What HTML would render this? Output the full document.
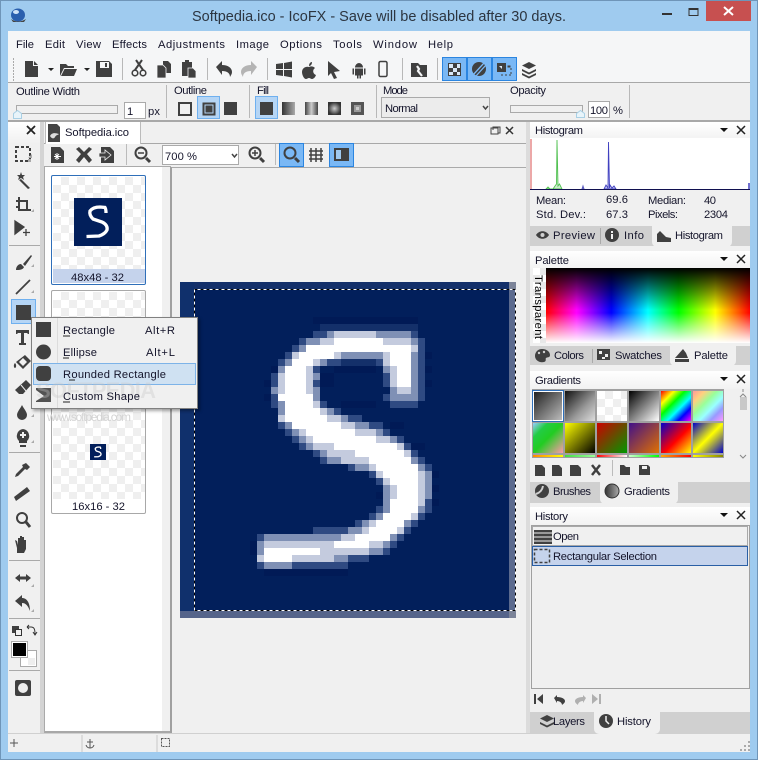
<!DOCTYPE html>
<html><head><meta charset="utf-8"><title>IcoFX</title>
<style>
html,body{margin:0;padding:0;width:758px;height:760px;overflow:hidden;background:#9fcbef}
div{position:absolute;box-sizing:border-box}
svg{position:absolute;left:0;top:0}
text{font:11.2px "Liberation Sans",sans-serif;fill:#14142a;white-space:pre}
.g{background:#f0f0f0}
.ck{background:repeating-conic-gradient(#efefef 0 25%,#fff 0 50%) 0 0/16px 16px}
.cell{width:30px;height:30px}
</style></head><body>
<div style="left:0;top:0;width:758px;height:760px;border:1px solid #6f95b8;background:#9fcbef"></div>
<div style="left:8px;top:31px;width:742px;height:721px;background:#f0f0f0"></div>
<div style="left:8px;top:31px;width:742px;height:52px;background:#f5f6f7"></div>
<div style="left:8px;top:82px;width:742px;height:1px;background:#a8a8a8"></div>
<div style="left:8px;top:120px;width:742px;height:2px;background:#a8a8a8"></div>
<div style="left:8px;top:122px;width:32px;height:611px;background:linear-gradient(#fff 0,#f0f0f0 22px)"></div>
<div style="left:40px;top:122px;width:4px;height:611px;background:#d4d4d4"></div>
<div style="left:44px;top:122px;width:483px;height:22px;background:#f0f0f0;border-bottom:1px solid #a8a8a8"></div>
<div style="left:45px;top:122px;width:96px;height:22px;background:#fff;border-right:1px solid #bbb;border-left:1px solid #bbb"></div>
<div style="left:44px;top:166px;width:1px;height:567px;background:#aaa"></div>
<div style="left:45px;top:166px;width:117px;height:566px;background:#fff"></div>
<div style="left:45px;top:166px;width:126px;height:1px;background:#aaa"></div>
<div style="left:45px;top:731px;width:126px;height:2px;background:#a8a8a8"></div>
<div style="left:162px;top:167px;width:8px;height:564px;background:#f0f0f0"></div>
<div style="left:170px;top:167px;width:2px;height:566px;background:#a0a0a0"></div>
<div style="left:172px;top:167px;width:354px;height:566px;background:#f0f0f0"></div>
<div style="left:172px;top:167px;width:354px;height:1px;background:#aaa"></div>
<div style="left:526px;top:122px;width:4px;height:611px;background:#dcdcdc"></div>
<div style="left:8px;top:733px;width:742px;height:1px;background:#d0d0d0"></div>
<!-- thumbnails -->
<div style="left:51px;top:175px;width:95px;height:110px;border:1px solid #2f6fb9;border-radius:2px;background:#fff"></div>
<div class="ck" style="left:53px;top:177px;width:92px;height:92px"></div>
<div style="left:53px;top:269px;width:92px;height:14px;background:#c5d3ec"></div>
<div style="left:74px;top:198px;width:48px;height:48px;background:#021f5b"></div>
<div style="left:51px;top:290px;width:95px;height:224px;border:1px solid #a8a8a8;border-radius:2px;background:#fff"></div>
<div class="ck" style="left:53px;top:292px;width:92px;height:207px"></div>
<div style="left:90px;top:444px;width:16px;height:16px;background:#021f5b"></div>
<!-- canvas -->
<div style="left:180px;top:282px;width:336px;height:336px;background:#021f5b"></div>
<!-- right panels -->
<div style="left:530px;top:122px;width:220px;height:18px;background:linear-gradient(#fff,#f2f2f2)"></div>
<div style="left:530px;top:138px;width:220px;height:52px;background:#fff"></div>
<div style="left:530px;top:226px;width:220px;height:20px;background:#d0d0d0"></div>
<div style="left:652px;top:226px;width:80px;height:21px;background:#f0f0f0;border-radius:0 0 5px 5px"></div>
<div style="left:530px;top:251px;width:220px;height:18px;background:linear-gradient(#fff,#f2f2f2)"></div>
<div style="left:533px;top:268px;width:13px;height:75px;background:repeating-conic-gradient(#e8e8e8 0 25%,#fff 0 50%) 0 0/14px 14px"></div>
<div style="left:546px;top:268px;width:204px;height:75px;background:linear-gradient(#000 0,rgba(0,0,0,0) 56%,rgba(255,255,255,0) 60%,#fff 100%),linear-gradient(90deg,#f00 0,#f0f 15%,#00f 32%,#0ff 50%,#0f0 65%,#ff0 83%,#f00 100%)"></div>
<div style="left:530px;top:346px;width:220px;height:19px;background:#d0d0d0"></div>
<div style="left:670px;top:346px;width:66px;height:20px;background:#f0f0f0;border-radius:0 0 5px 5px"></div>
<div style="left:530px;top:371px;width:220px;height:18px;background:linear-gradient(#fff,#f2f2f2)"></div>
<div style="left:532px;top:389px;width:192px;height:69px;background:#a0a0a0"></div>
<div class="cell" style="left:533px;top:391px;background:linear-gradient(135deg,#222,#bbb);outline:1px solid #2f6fb9;border:1px solid #fff"></div>
<div class="cell" style="left:565px;top:391px;background:linear-gradient(135deg,#111,#999 60%,#ddd)"></div>
<div class="cell ck" style="left:597px;top:391px"></div>
<div class="cell" style="left:629px;top:391px;background:linear-gradient(135deg,#000,#fff)"></div>
<div class="cell" style="left:661px;top:391px;background:linear-gradient(135deg,#f00,#ff0 22%,#0f0 40%,#0ff 60%,#00f 78%,#f0f)"></div>
<div class="cell" style="left:693px;top:391px;background:linear-gradient(135deg,#f99,#ffd080 20%,#9f9 40%,#9ff 60%,#99f 78%,#f9f)"></div>
<div class="cell" style="left:533px;top:423px;background:linear-gradient(135deg,#9cf,#2c4,#2c2 50%,#f9a)"></div>
<div class="cell" style="left:565px;top:423px;background:linear-gradient(135deg,#ff0,#000)"></div>
<div class="cell" style="left:597px;top:423px;background:linear-gradient(135deg,#c00,#090)"></div>
<div class="cell" style="left:629px;top:423px;background:linear-gradient(135deg,#40108a,#e07000)"></div>
<div class="cell" style="left:661px;top:423px;background:linear-gradient(135deg,#00c,#f00 55%,#ff0)"></div>
<div class="cell" style="left:693px;top:423px;background:linear-gradient(135deg,#00c,#ff0 50%,#00c)"></div>
<div style="left:533px;top:455px;width:30px;height:2px;background:linear-gradient(90deg,#f80,#ff0)"></div>
<div style="left:565px;top:455px;width:30px;height:2px;background:linear-gradient(90deg,#4d4,#9f9)"></div>
<div style="left:597px;top:455px;width:30px;height:2px;background:linear-gradient(90deg,#f00,#fff)"></div>
<div style="left:629px;top:455px;width:30px;height:2px;background:linear-gradient(90deg,#cfc,#0f0)"></div>
<div style="left:661px;top:455px;width:30px;height:2px;background:linear-gradient(90deg,#fa0,#f00)"></div>
<div style="left:693px;top:455px;width:30px;height:2px;background:linear-gradient(90deg,#ff0,#880)"></div>
<div style="left:740px;top:397px;width:7px;height:13px;background:#c8c8c8"></div>
<div style="left:530px;top:482px;width:220px;height:21px;background:#d0d0d0"></div>
<div style="left:600px;top:482px;width:78px;height:22px;background:#f0f0f0;border-radius:0 0 5px 5px"></div>
<div style="left:530px;top:507px;width:220px;height:18px;background:linear-gradient(#fff,#f2f2f2)"></div>
<div style="left:531px;top:525px;width:219px;height:164px;border:1px solid #a0a0a0;background:#f0f0f0"></div>
<div style="left:532px;top:526px;width:216px;height:20px;border:1px solid #a8a8a8"></div>
<div style="left:532px;top:546px;width:216px;height:20px;border:1px solid #2a5fa5;background:#c5d3ec"></div>
<div style="left:530px;top:712px;width:220px;height:21px;background:#d0d0d0"></div>
<div style="left:594px;top:712px;width:66px;height:22px;background:#f0f0f0;border-radius:0 0 5px 5px"></div>

<svg width="758" height="760" viewBox="0 0 758 760">
<!-- window chrome -->
<rect x="706" y="1" width="45" height="20" fill="#c75050"/>
<path d="M724 7l9 8M733 7l-9 8" stroke="#fff" stroke-width="2" fill="none"/>
<rect x="662" y="13" width="10" height="2" fill="#333"/>
<rect x="689" y="8.500" width="9" height="7" fill="none" stroke="#333"/><rect x="689" y="8" width="9" height="2" fill="#333"/>
<ellipse cx="18" cy="15" rx="7" ry="6.500" fill="#2a5fae"/><ellipse cx="16" cy="12" rx="3" ry="2" fill="#cfe2f7"/><path d="M11 19q7 5 15 0l-2 3H13z" fill="#444"/>
<text x="192" y="21" textLength="374" lengthAdjust="spacingAndGlyphs" style="font-size:15px;fill:#2c3540">Softpedia.ico - IcoFX - Save will be disabled after 30 days.</text>
<!-- menus -->
<text x="16" y="48" textLength="18">File</text><text x="45" y="48" textLength="20">Edit</text><text x="76" y="48" textLength="25">View</text><text x="112" y="48" textLength="35">Effects</text><text x="158" y="48" textLength="67">Adjustments</text><text x="236" y="48" textLength="33">Image</text><text x="280" y="48" textLength="42">Options</text><text x="333" y="48" textLength="29">Tools</text><text x="373" y="48" textLength="44">Window</text><text x="428" y="48" textLength="25">Help</text>
<!-- toolbar -->
<g fill="#404040">
<path d="M13 58h1v2h-1zM13 61h1v2h-1zM13 64h1v2h-1zM13 67h1v2h-1zM13 70h1v2h-1zM13 73h1v2h-1zM13 76h1v2h-1zM13 79h1v2h-1z" fill="#aaa"/>
<path d="M25 61h8v5h5v11H25zM34 61l4 4h-4z"/>
<path d="M48 68h6l-3 3zM84 68h6l-3 3z" fill="#222"/>
<path d="M60 64h6l2 2h6v2H64l-4 8zM64.500 69H77l-3 7H61z"/>
<path d="M96 61h13l3 3v13H96z"/><rect x="100" y="62" width="9" height="6" fill="#f5f6f7"/><rect x="105" y="63" width="2" height="4"/>
<path d="M135 70L142 60M143 70L136 60" stroke="#404040" stroke-width="2"/><circle cx="135" cy="73" r="2.800" fill="none" stroke="#404040" stroke-width="1.600"/><circle cx="143" cy="73" r="2.800" fill="none" stroke="#404040" stroke-width="1.600"/>
<path d="M163 61h5l3 3v9h-8z"/><path d="M157 65h6l3 3v10h-9z" stroke="#f5f6f7" stroke-width=".8"/>
<path d="M182 62h3v-2h4v2h3v14h-10z"/><path d="M188 68h5l3 3v7h-8z" stroke="#f5f6f7" stroke-width=".8"/>
<path d="M216 67l6-6v4c6 0 10 3 10 7 0 2-1 3-2 5 0-4-3-6-8-6v4z"/>
<path d="M257 67l-6-6v4c-6 0-10 3-10 7 0 2 1 3 2 5 0-4 3-6 8-6v4z" fill="#b4b4b4"/>
<path d="M276 64l7-1v6h-7zM284 63l8-1.500V69h-8zM276 70h7v6l-7-1zM284 70h8v7.500l-8-1.500z"/>
<path d="M309 67c2-1 4-1 6 1-3 2-2 6 1 7-1 3-3 4-4 4-1 0-2-1-3-1s-2 1-3 1c-2 0-4-4-4-7 0-4 4-6 7-5zM309 66c0-2 1-4 3-4 0 2-1 4-3 4z"/>
<path d="M328 61l12 10-6 1 3 6-3 1-3-6-3 3z"/>
<path d="M355 67.500a4 4.500 0 0 1 8 0zM355 68.500h8v7h-2v3h-1.500v-3h-1v3H357v-3h-2zM352.500 68.500h1.500v6h-1.500zM364 68.500h1.500v6H364z"/>
<rect x="379" y="61.500" width="8" height="15" rx="1.500" fill="none" stroke="#404040" stroke-width="1.500"/>
<path d="M411 63h7l2 2h7v12h-16z"/><path d="M417 66l2 3-1 2 4 5" stroke="#f5f6f7" stroke-width="2.200" fill="none"/>
<path d="M122 58h1v22h-1zM207 58h1v22h-1zM267 58h1v22h-1zM402 58h1v22h-1zM437 58h1v22h-1z" fill="#b8b8b8"/>
<g fill="#7ab8f5" stroke="#2b85e0"><rect x="442.500" y="57.500" width="24" height="23"/><rect x="467.500" y="57.500" width="24" height="23"/><rect x="492.500" y="57.500" width="24" height="23"/></g>
<rect x="448" y="63" width="13" height="13"/><path d="M449 64h4v4h-4zM453 68h4v4h-4zM457 72h3v3h-3zM457 64h3v4h-3zM449 72h4v3h-4z" fill="#dbe9f7"/>
<circle cx="479" cy="69" r="7"/><path d="M473 75l11-12M476 76l10-11" stroke="#7ab8f5" stroke-width="1.300"/>
<path d="M497 63h9v9h-9z"/><path d="M502 66h-3l3 3z" fill="#dbe9f7"/><path d="M508 66h2v1h-2zM511 68v2M511 72v2M501 75h2M505 75h2M509 75h2" stroke="#404040"/>
<path d="M529 62l7 3.500-7 3.500-7-3.500zM522 69l7 3.500 7-3.500v2l-7 3.500-7-3.500zM522 73l7 3.500 7-3.500v2l-7 3.500-7-3.500z"/>
</g>
<!-- options bar -->
<text x="16" y="95" textLength="64">Outline Width</text><text x="174" y="94" textLength="33">Outline</text><text x="257" y="94" textLength="12">Fill</text><text x="383" y="94" textLength="25">Mode</text><text x="510" y="94" textLength="36">Opacity</text>
<rect x="16.500" y="105.500" width="101" height="8" fill="#f0f0f0" stroke="#aaa"/>
<path d="M13.500 118.500v-5l4-3 4 3v5z" fill="#e8f4fa" stroke="#a9d0e5"/>
<rect x="124.500" y="102.500" width="21" height="16" fill="#fff" stroke="#aaa"/><text x="127" y="115">1</text><text x="148" y="115" textLength="12">px</text>
<path d="M166 85h1v33h-1zM249 85h1v33h-1zM376 85h1v33h-1zM629 85h1v33h-1z" fill="#b8b8b8"/>
<g fill="#404040">
<rect x="179" y="103" width="12" height="12" fill="none" stroke="#404040" stroke-width="2"/>
<rect x="197.500" y="96.500" width="22" height="22" fill="#b5d5f5" stroke="#6fb0ef"/><rect x="203" y="103" width="12" height="12" fill="#404040" stroke="#404040" stroke-width="1"/><rect x="205" y="105" width="8" height="8" fill="#404040" stroke="#b5d5f5"/>
<rect x="224" y="102" width="13" height="13"/>
<rect x="255.500" y="96.500" width="22" height="22" fill="#b5d5f5" stroke="#6fb0ef"/><rect x="260" y="102" width="13" height="13"/>
</g>
<defs>
<linearGradient id="h1"><stop offset="0" stop-color="#333"/><stop offset="1" stop-color="#aaa"/></linearGradient>
<linearGradient id="h2"><stop offset="0" stop-color="#444"/><stop offset=".5" stop-color="#ccc"/><stop offset="1" stop-color="#444"/></linearGradient>
<radialGradient id="h3"><stop offset="0" stop-color="#ccc"/><stop offset="1" stop-color="#333"/></radialGradient>
</defs>
<rect x="282" y="102" width="13" height="13" fill="url(#h1)"/><rect x="305" y="102" width="13" height="13" fill="url(#h2)"/><rect x="328" y="102" width="13" height="13" fill="url(#h3)"/><rect x="351" y="102" width="13" height="13" fill="#555"/><rect x="354" y="105" width="7" height="7" fill="#999"/><rect x="356" y="107" width="3" height="3" fill="#ccc"/>
<rect x="381.500" y="97.500" width="108" height="20" fill="#ececec" stroke="#aaa"/><text x="385" y="112" textLength="33">Normal</text><path d="M483 106l2.500 3 2.500-3" fill="none" stroke="#444" stroke-width="1.500"/>
<rect x="510.500" y="105.500" width="72" height="7" fill="#f0f0f0" stroke="#aaa"/><path d="M576.500 117.500v-4l4-3 4 3v4z" fill="#e8f4fa" stroke="#a9d0e5"/>
<rect x="588.500" y="101.500" width="21" height="16" fill="#fff" stroke="#aaa"/><text x="590" y="114" textLength="18">100</text><text x="613" y="114" textLength="10">%</text>
<!-- left tools -->
<path d="M27 126l8 8M35 126l-8 8" stroke="#222" stroke-width="1.800"/>
<g fill="#404040">
<rect x="16" y="147" width="14" height="14" fill="none" stroke="#404040" stroke-width="2" stroke-dasharray="3 2"/>
<path d="M21 179l9 9-2 1-9-9zM21 172l1 3 3 0-2 2 1 3-3-2-3 2 1-3-2-2 3 0z"/>
<path d="M20 197v12h11v2H18v-3h-2v-2h2v-9zM16 200h12v9h-2v-7H16z"/>
<path d="M15 221l9 6-9 7zM26 229v7M23 232.500h7" stroke="#404040" stroke-width="1.300"/>
<path d="M9 245h31v1H9zM9 452h31v1H9zM9 560h31v1H9zM9 618h31v1H9zM9 670h31v1H9z" fill="#aaa"/>
<path d="M31 255l-8 9 2 2 7-10zM16 270c0-3 2-6 5-6l3 3c-1 3-5 3-8 3z"/>
<path d="M16 294l14-14" stroke="#404040" stroke-width="1.800"/>
<rect x="11.500" y="299.500" width="24" height="24" fill="#b5d5f5" stroke="#6fb0ef"/><rect x="16" y="305" width="15" height="15"/>
<path d="M16 330h13v4h-1l-1-1h-3v10h2v2h-7v-2h2v-10h-3l-1 1h-1z"/>
<path d="M25 355l6 6-8 8-7-7zM23 358l-4 4 4 4 4-4zM15 363c-2 2-1 5 0 5s2-3 0-5z"/>
<path d="M26 380l5 5-8 9h-4l-4-4z"/><path d="M21 385l5 6" stroke="#f0f0f0"/>
<path d="M22 405c2 4 5 7 5 10a5 5 0 0 1-10 0c0-3 3-6 5-10z"/>
<path d="M23 429a7 7 0 0 1 4 12v2h-8v-2a7 7 0 0 1 4-12zM20 445h6v2h-6z"/><path d="M23 432v6M20 435h6" stroke="#f0f0f0" stroke-width="2"/>
<path d="M26 463l4 4-3 3-2-1-7 7-3 1 1-3 7-7-1-2z"/>
<path d="M27 487l3 4-14 10-2-4z"/>
<circle cx="22" cy="518" r="5" fill="none" stroke="#404040" stroke-width="2"/><path d="M26 522l4 5" stroke="#404040" stroke-width="3"/>
<path d="M17 548l-2-8 2 1 1 4V538h2v5V536h2v7V537h2v6V540h2v9l-2 4h-7z"/>
<path d="M15 578l5-4v2.500h6V574l5 4-5 4v-2.500h-6V582z"/>
<path d="M15 601l7-6v3c5 0 8 5 8 13-2-5-4-8-8-8v4z"/>
<rect x="12" y="626" width="7" height="7"/><rect x="15.500" y="629.500" width="6" height="6" fill="#f0f0f0" stroke="#333"/>
<path d="M27 627h4c3 0 4 2 4 7M33 632l2 3 2-3M27 627l2-2M27 627l2 2" stroke="#333" fill="none"/>
<rect x="20.500" y="650.500" width="16" height="16" fill="#fff" stroke="#aaa"/><rect x="28" y="658" width="7" height="7" fill="#eee"/>
<rect x="11.500" y="641.500" width="16" height="16" fill="#000" stroke="#aaa" stroke-width="1"/><rect x="12.500" y="642.500" width="14" height="14" fill="#000" stroke="#fff"/>
<rect x="15" y="680" width="16" height="16" rx="2"/><circle cx="23" cy="688" r="5" fill="#eee"/>
<path d="M28 159h3v3h-3zM32 154l-4 4h4zM34 209l-3 3h3zM34 264l-3 3h3zM34 290l-3 3h3zM34 414l-3 3h3zM34 440l-3 3h3zM34 584l-3 3h3zM34 609l-3 3h3z" fill="#aaa"/>
</g>
<!-- document tab -->
<path d="M48 124h9l3 3v15H48z" fill="#444"/><path d="M50 136c2-4 6-3 9-2-1 1-3 1-4 3s-3 2-5-1z" fill="#ddd"/>
<text x="65" y="136" textLength="64">Softpedia.ico</text>
<g fill="#404040">
<path d="M491 128h7v6h-7z" fill="none" stroke="#444"/><path d="M493 130v-3h7v6h-2" fill="none" stroke="#444"/><path d="M506 127l7 7M513 127l-7 7" stroke="#333" stroke-width="1.500"/>
<path d="M51 147h9l4 4v12H51z"/><path d="M57 153v7M54 156.500h7M55 154l4 5M59 154l-4 5" stroke="#fff"/>
<path d="M76 149l3-2 5 5 5-5 3 2-5 5 5 6-3 3-5-6-5 6-3-3 5-6z"/>
<path d="M101 147h9l4 4v12h-13z"/><path d="M99 153h6v-3l6 5-6 5v-3h-6z" stroke="#f0f0f0" stroke-width=".8"/>
<path d="M126 144h1v21h-1zM275 144h1v21h-1z" fill="#bbb"/>
<circle cx="141" cy="153" r="5.500" fill="none" stroke="#404040" stroke-width="2"/><path d="M138 153h6" stroke="#404040" stroke-width="1.500"/><path d="M146 158l4 4" stroke="#404040" stroke-width="3"/>
<rect x="162.500" y="145.500" width="76" height="19" fill="#fff" stroke="#aaa"/>
<path d="M232 154l2.500 3 2.500-3" fill="none" stroke="#444" stroke-width="1.500"/>
<circle cx="255" cy="153" r="5.500" fill="none" stroke="#404040" stroke-width="2"/><path d="M252 153h6M255 150v6" stroke="#404040" stroke-width="1.500"/><path d="M260 158l4 4" stroke="#404040" stroke-width="3"/>
<rect x="279.500" y="143.500" width="24" height="23" fill="#7ab8f5" stroke="#2b85e0"/><circle cx="290" cy="153" r="5.500" fill="none" stroke="#404040" stroke-width="2"/><path d="M295 158l4 4" stroke="#404040" stroke-width="3"/>
<path d="M311 148v14M316 148v14M321 148v14M309 151h14M309 155h14M309 159h14" stroke="#404040" stroke-width="1.500"/>
<rect x="329.500" y="143.500" width="24" height="23" fill="#7ab8f5" stroke="#2b85e0"/><rect x="334" y="148" width="15" height="13" fill="#404040"/><rect x="336" y="150" width="5" height="9" fill="#9fc9f0"/>
</g>
<text x="165" y="160" textLength="32">700 %</text>
<!-- thumbnail labels and S -->
<text x="71" y="281" textLength="53">48x48 - 32</text>
<g transform="translate(74,198)"><path d="M12.500 38.500L25 38Q31 36 33 32Q34 27 28 24L19 21Q15 17 16 13Q19 9 26 9L31 9.500Q32 11 32 15" fill="none" stroke="#fff" stroke-width="3.300"/></g>
<g transform="translate(90,444) scale(.333)"><path d="M12.500 38.500L25 38Q31 36 33 32Q34 27 28 24L19 21Q15 17 16 13Q19 9 26 9L31 9.500Q32 11 32 15" fill="none" stroke="#fff" stroke-width="4"/></g>
<text x="72" y="510" textLength="53">16x16 - 32</text>
<!-- right panel text -->
<g fill="#111"><path d="M720 128h8l-4 4zM720 257h8l-4 4zM720 377h8l-4 4zM720 513h8l-4 4z"/></g>
<path d="M737 126l8 8M745 126l-8 8M737 255l8 8M745 255l-8 8M737 375l8 8M745 375l-8 8M737 511l8 8M745 511l-8 8" stroke="#222" stroke-width="1.500"/>
<text x="535" y="134" textLength="48">Histogram</text><text x="535" y="264" textLength="34">Palette</text><text x="535" y="384" textLength="46">Gradients</text><text x="535" y="520" textLength="33">History</text>
<!-- histogram -->
<path d="M531 139V189" stroke="#e68a8a" stroke-width="1.500"/>
<path d="M557 140L556.500 184L555 186L553 189L550 189L548 187L546 189H562L559.500 184L558 186Z" fill="#cdeccd" stroke="#50c050" stroke-width=".9"/>
<path d="M608.500 142L608 188L606 185L604 189H616L614 186L612 188L610 185L609.500 188Z" fill="#c5c5ef" stroke="#4040c0" stroke-width=".9"/>
<path d="M582 189l1-3 1 3z" fill="#6060c0" stroke="#6060c0"/>
<path d="M749 183v6" stroke="#4040c0" stroke-width="1.500"/>
<path d="M530 189.500H750" stroke="#101050"/>
<text x="536" y="204" textLength="30">Mean:</text><text x="606" y="203" textLength="22">69.6</text><text x="648" y="204" textLength="38">Median:</text><text x="704" y="204" textLength="12">40</text>
<text x="536" y="218" textLength="50">Std. Dev.:</text><text x="606" y="218" textLength="22">67.3</text><text x="648" y="218" textLength="30">Pixels:</text><text x="704" y="218" textLength="24">2304</text>
<g fill="#404040">
<path d="M536 235c3-5 10-5 13 0-3 5-10 5-13 0z"/><circle cx="542.500" cy="235" r="2" fill="#d0d0d0"/>
<path d="M600 228h1v16h-1zM592 349h1v14h-1z" fill="#aaa"/>
<circle cx="612" cy="235" r="7"/><path d="M611 231h2v2h-2zM611 234h2v5h-2z" fill="#f0f0f0"/>
<path d="M657 242v-8l3-3 3 3 3 3 5 1v4z"/>
<path d="M542 349c5 0 8 3 8 6 0 3-3 2-4 3s1 3-2 4c-5 1-9-2-9-6s3-7 7-7z"/><circle cx="539" cy="353" r="1.200" fill="#d0d0d0"/><circle cx="544" cy="352" r="1.200" fill="#d0d0d0"/>
<rect x="597" y="349" width="13" height="11"/><path d="M599 351h3v3h-3zM605 354h3v3h-3zM602 357h3v2h-3z" fill="#eee"/>
<path d="M675 362v-3h14v3zM675 358l8-9 3 4 2 5z"/>
<path d="M535 465h7l3 3v8H535z"/><path d="M552 465h7l3 3v8h-10zM570 465h8l3 3v8h-11z"/><path d="M592 465l8 10M600 465l-8 10" stroke="#404040" stroke-width="2.500"/>
<path d="M612 460h1v16h-1z" fill="#bbb"/>
<path d="M620 465h4l2 2h4v8h-10z"/><path d="M639 465h9l2 2v8h-11z"/><rect x="642" y="466" width="5" height="3" fill="#f0f0f0"/>
<circle cx="542" cy="491" r="7"/><path d="M536 494q6-2 7-8" stroke="#d0d0d0" stroke-width="2" fill="none"/>
<circle cx="612" cy="491" r="7" fill="url(#h1)" stroke="#333"/>
<path d="M547 715l7 3.500-7 3.500-7-3.500zM540 722l7 3.500 7-3.500v2l-7 3.500-7-3.500z"/>
<circle cx="606" cy="721" r="7"/><path d="M606 716v5l3 3" stroke="#f0f0f0" stroke-width="1.500" fill="none"/>
<path d="M534 530h18v14h-18z"/><path d="M534 533h18M534 537h18M534 541h18" stroke="#f0f0f0"/>
<path d="M534 694h2v10h-2zM537 699l6-5v10z"/>
<path d="M554 698l3-3v2c5 0 8 2 8 4 0 2-2 3-3 4 0-2-2-4-5-4v2z"/>
<path d="M586 698l-3-3v2c-5 0-8 2-8 4 0 2 2 3 3 4 0-2 2-4 5-4v2z" fill="#b0b0b0"/>
<path d="M601 694h-2v10h2zM598 699l-6-5v10z" fill="#b0b0b0"/>
<path d="M744 749h2v2h-2zM748 745h2v2h-2zM748 749h2v2h-2zM744 745h2v2h-2zM740 749h2v2h-2zM748 741h2v2h-2z" fill="#aaa"/>
</g>
<text x="553" y="239" textLength="42">Preview</text><text x="624" y="239" textLength="20">Info</text><text x="675" y="239" textLength="48">Histogram</text>
<text transform="translate(535,275) rotate(90)" textLength="64" style="font-size:11.200px;fill:#000">Transparent</text>
<text x="554" y="359" textLength="30">Colors</text><text x="615" y="359" textLength="47">Swatches</text><text x="694" y="359" textLength="34">Palette</text>
<text x="553" y="495" textLength="38">Brushes</text><text x="624" y="495" textLength="46">Gradients</text>
<text x="553" y="540" textLength="26">Open</text><text x="553" y="560" textLength="104">Rectangular Selection</text>
<rect x="534.500" y="549.500" width="15" height="13" fill="none" stroke="#404040" stroke-width="1.500" stroke-dasharray="3 2"/>
<text x="553" y="725" textLength="32">Layers</text><text x="617" y="725" textLength="34">History</text>
<path d="M743 389v3M740 397l3-3 3 3M740 455l3 3 3-3" fill="none" stroke="#888"/>
<!-- status bar -->
<path d="M82 735v17M157 735v17" stroke="#c8c8c8" stroke-width="1"/>
<path d="M10 743h8M14 739v8" stroke="#555"/>
<path d="M90 739v9M87 742h6M86 745q1 3 4 3t4-3" stroke="#555" fill="none"/>
<rect x="161.500" y="738.500" width="8" height="8" fill="none" stroke="#555" stroke-dasharray="2 1"/>
</svg>

<!-- big icon -->
<svg width="336" height="336" viewBox="0 0 48 48" style="left:180px;top:282px" shape-rendering="crispEdges" fill="none" stroke-width="1">
<path d="M0 .5h47" stroke="#14306a"/><path d="M.5 0v47M1.500 0v47" stroke="#10306c"/>
<path d="M0 47.500h47" stroke="#55648a"/><path d="M47.500 0v47" stroke="#5b6a8e"/><path d="M47 0h1v1h-1zM47 47h1v1h-1z" fill="#7c8499"/>
<path stroke="#011a56" d="M19 5.500h15M14 11.500h1M20 13.500h2M20 14.500h2M22 12.500h6M23 17.500h5M13 12.500h1M12 14.500h1M12 16.500h1M35 10.500h1M35 12.500h1M35 14.500h1M30 20.500h2M33 23.500h2M36 27.500h1M36 29.500h1M36 31.500h1M28 28.500h1M28 30.500h1M10 37.500h1M10 38.500h1M12 41.500h12"/>
<path stroke="#14306a" d="M20 6.500h14M23 11.500h5"/>
<path stroke="#2f4a82" d="M19 7.500h2M33 7.500h1M17 8.500h1M34 8.500h1M16 9.500h1M34 9.500h1M15 10.500h1M34 10.500h1M14 11.500h1M21 11.500h2M28 11.500h1M34 11.500h1M19 12.500h1M34 12.500h1M13 13.500h1M29 13.500h1M34 13.500h1M13 14.500h1M19 14.500h1M29 14.500h1M34 14.500h1M34 15.500h1M13 16.500h1M29 16.500h1M34 16.500h1M13 17.500h1M20 17.500h1M30 17.500h4M22 18.500h1M24 19.500h2M14 20.500h1M27 20.500h2M15 21.500h1M29 21.500h1M16 22.500h1M31 22.500h1M17 23.500h1M32 23.500h1M19 24.500h1M33 24.500h1M20 25.500h1M34 25.500h1M24 26.500h1M35 26.500h1M27 27.500h1M28 28.500h1M35 31.500h1M28 32.500h1M35 32.500h1M27 33.500h1M34 33.500h1M25 34.500h1M33 34.500h1M19 35.500h5M32 35.500h1M11 36.500h1M31 36.500h1M30 37.500h1M29 38.500h1M24 39.500h3M11 40.500h1M16 40.500h8"/>
<path stroke="#7f90b5" d="M21 7.500h1M28 7.500h5M18 8.500h2M33 8.500h1M17 9.500h1M23 10.500h6M33 10.500h1M15 11.500h1M20 11.500h1M33 11.500h1M14 12.500h1M29 12.500h1M33 12.500h1M19 13.500h1M33 13.500h1M33 14.500h1M13 15.500h1M19 15.500h1M30 15.500h1M33 15.500h1M19 16.500h1M30 16.500h4M14 17.500h1M14 18.500h1M21 18.500h1M23 19.500h1M15 20.500h1M25 20.500h2M16 21.500h1M28 21.500h1M17 22.500h1M30 22.500h1M18 23.500h1M20 24.500h1M21 25.500h2M33 25.500h1M25 26.500h2M34 26.500h1M35 27.500h1M35 28.500h1M29 29.500h1M35 29.500h1M29 30.500h1M35 30.500h1M29 31.500h1M29 32.500h1M34 32.500h1M28 33.500h1M26 34.500h1M32 34.500h1M24 35.500h2M12 36.500h11M30 36.500h1M11 37.500h1M29 37.500h1M11 38.500h1M27 38.500h2M22 39.500h2M12 40.500h4"/>
<path stroke="#c4cbde" d="M22 7.500h6M20 8.500h2M29 8.500h4M33 9.500h1M16 10.500h1M22 10.500h1M29 10.500h1M19 11.500h1M29 11.500h1M18 12.500h1M30 12.500h1M14 13.500h1M18 13.500h1M30 13.500h1M14 14.500h1M18 14.500h1M30 14.500h1M14 15.500h1M18 15.500h1M31 15.500h2M19 17.500h1M20 18.500h1M14 19.500h1M21 19.500h2M23 20.500h2M17 21.500h1M25 21.500h3M18 22.500h1M28 22.500h2M19 23.500h3M31 23.500h1M21 24.500h4M32 24.500h1M23 25.500h4M27 26.500h1M28 27.500h1M34 27.500h1M29 28.500h1M34 28.500h1M30 29.500h1M34 29.500h1M30 30.500h1M34 30.500h1M34 31.500h1M33 33.500h1M27 34.500h1M26 35.500h1M31 35.500h1M23 36.500h2M12 37.500h10M27 37.500h2M20 38.500h7M11 39.500h1M16 39.500h6"/>
<path stroke="#fff" d="M22 8.500h7M18 9.500h15M17 10.500h5M30 10.500h3M16 11.500h3M30 11.500h3M15 12.500h3M31 12.500h2M15 13.500h3M31 13.500h2M15 14.500h3M31 14.500h2M15 15.500h3M14 16.500h5M15 17.500h4M15 18.500h5M15 19.500h6M16 20.500h7M18 21.500h7M19 22.500h9M22 23.500h9M25 24.500h7M27 25.500h6M28 26.500h6M29 27.500h5M30 28.500h4M31 29.500h3M31 30.500h3M30 31.500h4M30 32.500h4M29 33.500h4M28 34.500h4M27 35.500h4M25 36.500h5M22 37.500h5M12 38.500h8M12 39.500h4"/>
</svg>
<svg width="758" height="760" viewBox="0 0 758 760" fill="none">
<path d="M194.500 289.500H515.500V610.500H194.500Z" stroke="#fff"/>
<path d="M194.500 289.500H515.500V610.500H194.500Z" stroke="#000" stroke-dasharray="3 3"/>
</svg>

<!-- popup -->
<div style="left:31px;top:317px;width:167px;height:92px;background:#f0f0f0;border:1px solid #808080;box-shadow:2px 2px 3px rgba(0,0,0,.35)"></div>
<div style="left:57px;top:318px;width:1px;height:90px;background:#dcdcdc"></div>
<div style="left:33px;top:363px;width:163px;height:22px;background:#cfe1f2;border:1px solid #7db3e8"></div>
<svg width="758" height="760" viewBox="0 0 758 760">
<rect x="36" y="322" width="15" height="15" fill="#404040"/>
<circle cx="43.500" cy="352" r="7.500" fill="#404040"/>
<rect x="36" y="366" width="15" height="15" rx="4" fill="#404040"/>
<path d="M36 388h15v14H36v-1l8-5-8-6z" fill="#404040" opacity=".9"/>
<text x="36" y="398" style="font-size:22px;font-weight:bold;fill:#c8c8c8;opacity:.35" textLength="120">SOFTPEDIA</text>
<text x="63" y="334" textLength="52">Rectangle</text><text x="145" y="334" textLength="30">Alt+R</text>
<text x="63" y="356" textLength="34">Ellipse</text><text x="146" y="356" textLength="29">Alt+L</text>
<text x="63" y="378" textLength="103">Rounded Rectangle</text>
<text x="63" y="400" textLength="77">Custom Shape</text>
<path d="M63 336h7M63 358h6M69 380h6M63 402h7" stroke="#222"/>
<text x="47" y="421" style="font-size:12px;fill:#d4d4d4" textLength="84">www.softpedia.com</text>
</svg>
</body></html>
